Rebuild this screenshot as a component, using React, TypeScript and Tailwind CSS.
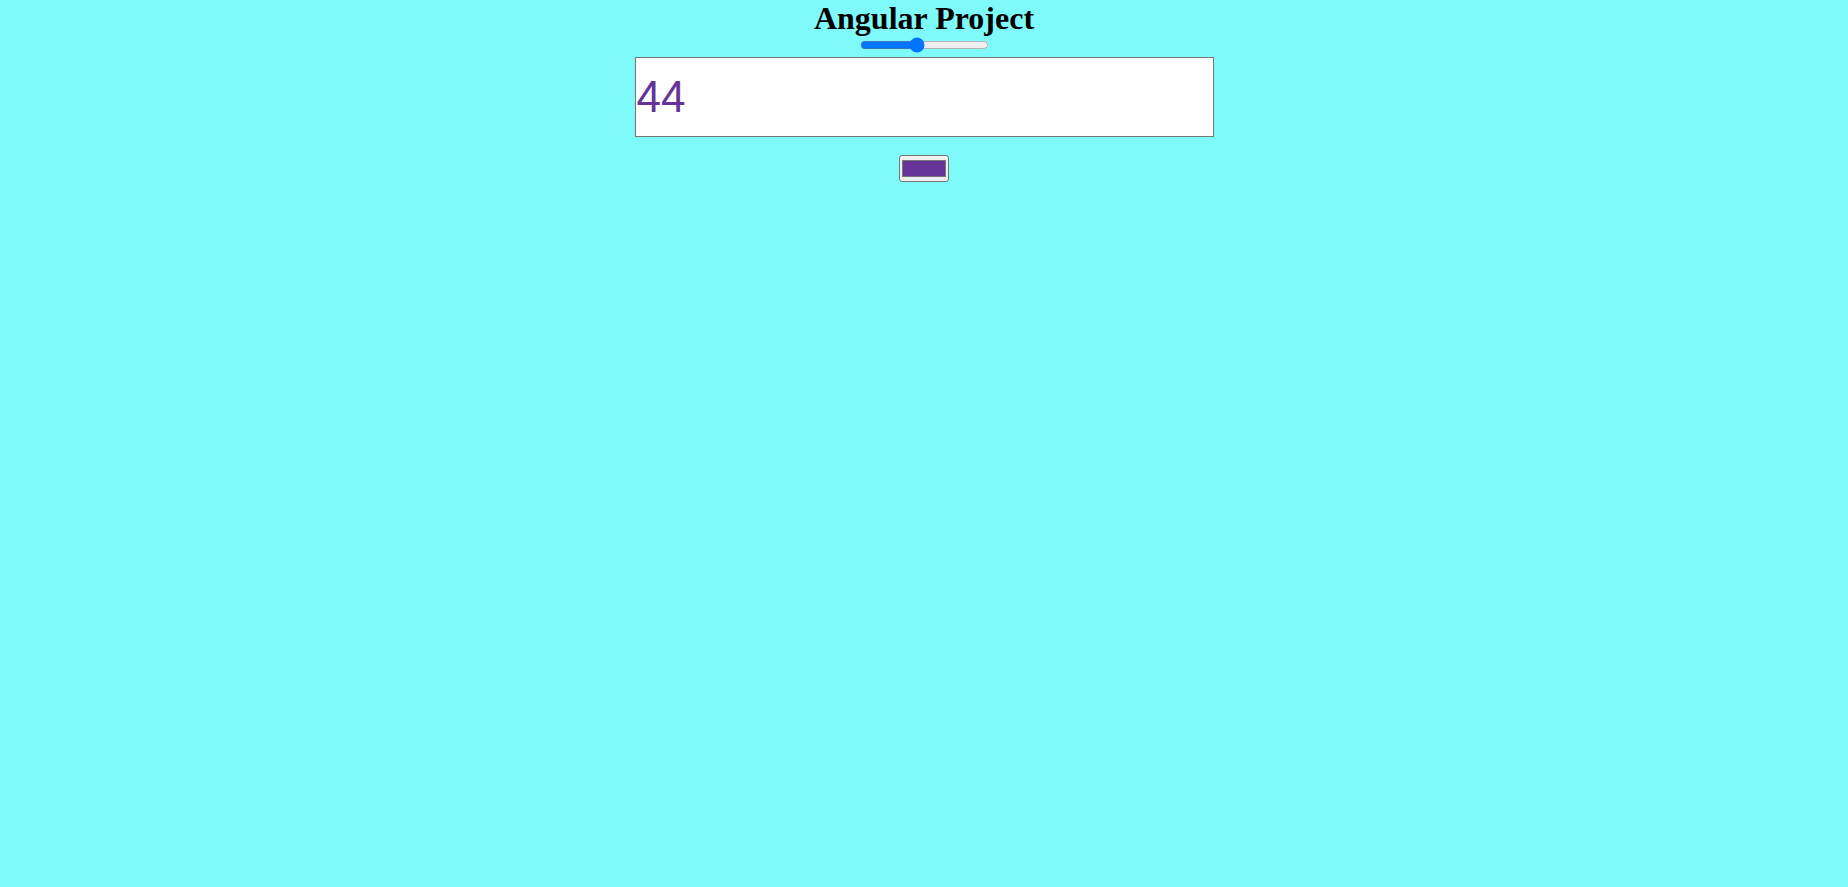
import React, { useState } from 'react';

const App = () => {
  const [size, setSize] = useState(44);
  const [color, setColor] = useState('#663399');
  return (
    <div className="min-h-[887px] w-full bg-[#7ffafb] flex flex-col items-center">
      <h1 className="text-[32px] leading-[37px] font-bold text-black font-['Liberation_Serif',serif]">
        Angular Project
      </h1>
      <input
        type="range"
        min={0}
        max={100}
        value={size}
        onChange={(e) => setSize(Number(e.target.value))}
        className="w-[129px] h-[16px] mb-[4px]"
      />
      <input
        type="text"
        value={String(size)}
        readOnly
        style={{ fontSize: size, color }}
        className="w-[579px] h-[80px] bg-white border border-[#767676] px-[1px] font-['Liberation_Sans',sans-serif] outline-none"
      />
      <input
        type="color"
        value={color}
        onChange={(e) => setColor(e.target.value)}
        className="mt-[18px] w-[50px] h-[27px] p-0 bg-[#efefef] border border-[#767676] rounded-[3px] cursor-pointer"
      />
    </div>
  );
};

export default App;
